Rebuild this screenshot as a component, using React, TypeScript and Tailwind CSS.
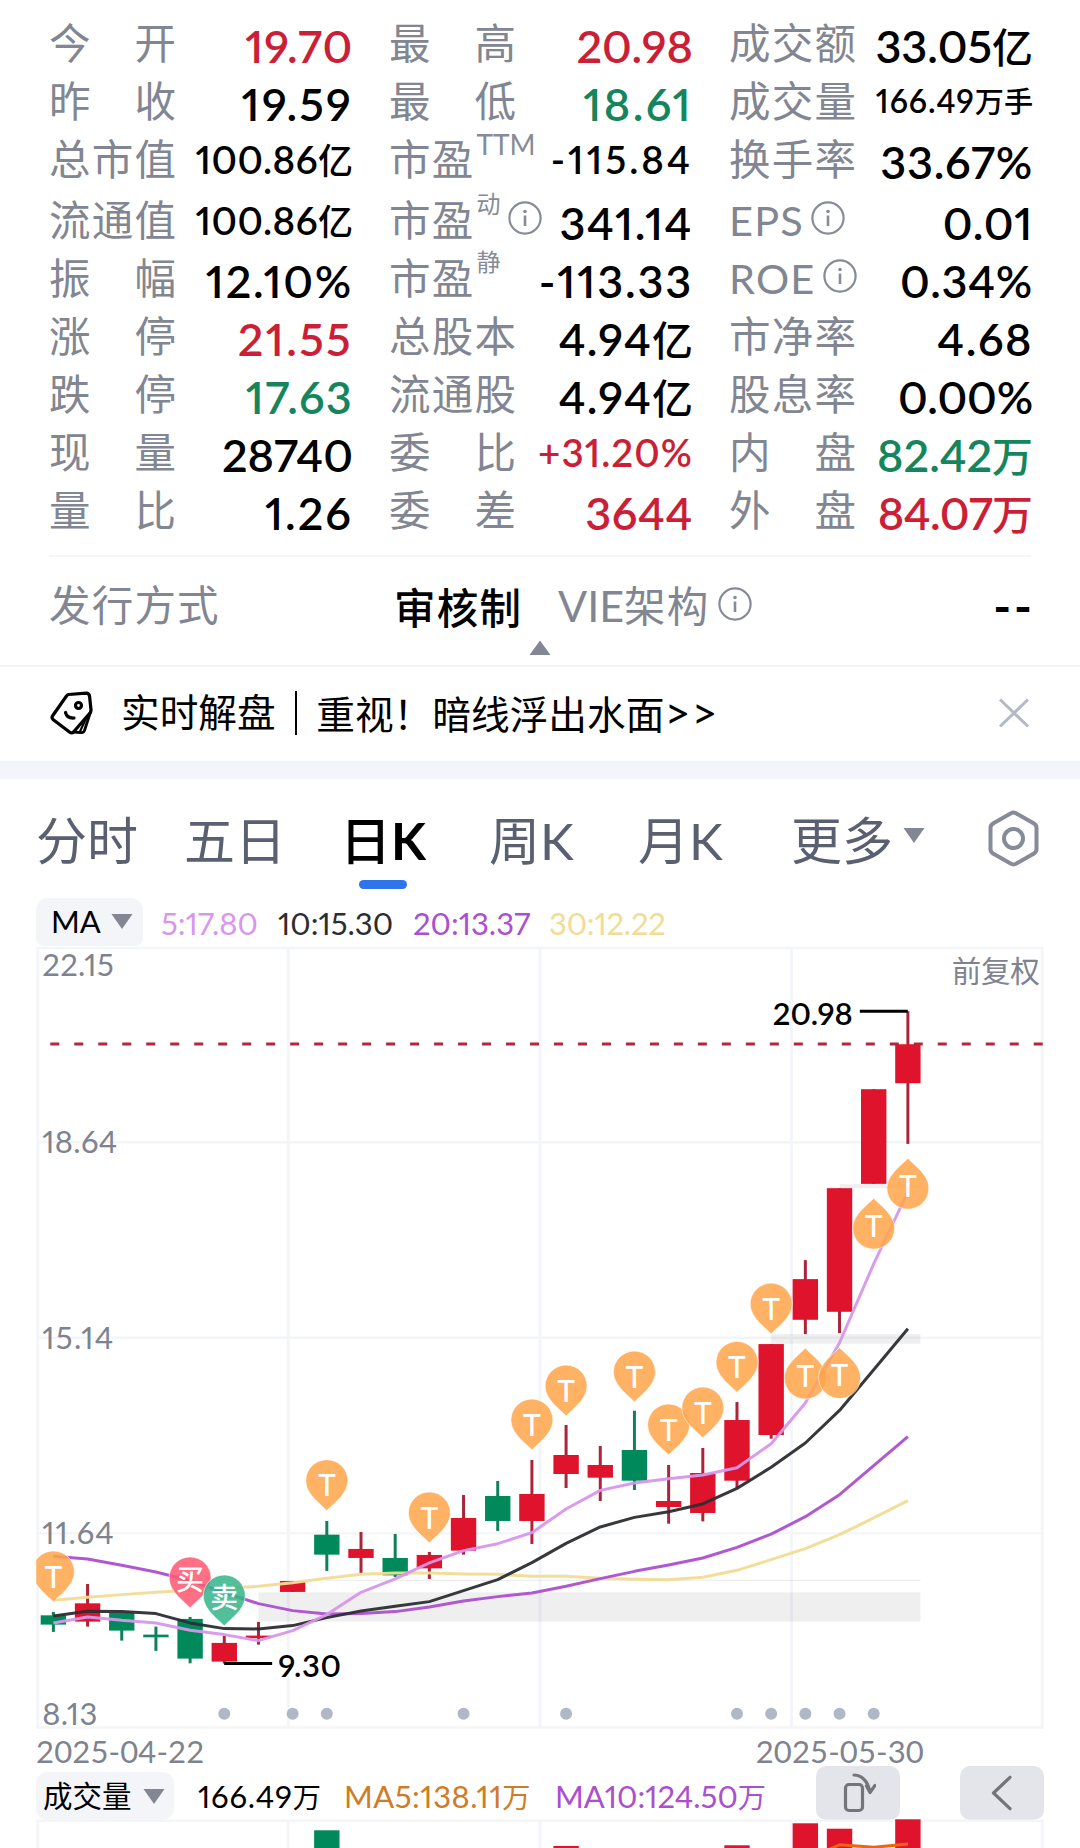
import { Fragment, type ReactNode } from "react";
import clsx from "clsx";

type Tone = "up" | "down" | "flat";

type Stat = {
  label: string;
  value: string;
  tone?: Tone;
  size?: "lg" | "md" | "sm";
  sup?: string;
  info?: boolean;
  track?: string;
};

const rows: Stat[][] = [
  [
    { label: "今　开", value: "19.70", tone: "up", track: "tracking-[0.6px]" },
    { label: "最　高", value: "20.98", tone: "up" },
    { label: "成交额", value: "33.05亿" },
  ],
  [
    { label: "昨　收", value: "19.59", track: "tracking-[2.2px]" },
    { label: "最　低", value: "18.61", tone: "down", track: "tracking-[2.4px]" },
    { label: "成交量", value: "166.49万手", size: "sm", track: "tracking-[0.9px]" },
  ],
  [
    { label: "总市值", value: "100.86亿", size: "md", track: "tracking-[0.4px]" },
    { label: "市盈", sup: "TTM", value: "-115.84", size: "md", track: "tracking-[3px]" },
    { label: "换手率", value: "33.67%", track: "tracking-[0.7px]" },
  ],
  [
    { label: "流通值", value: "100.86亿", size: "md", track: "tracking-[0.4px]" },
    { label: "市盈", sup: "动", info: true, value: "341.14", track: "tracking-[1.5px]" },
    { label: "EPS", info: true, value: "0.01", track: "tracking-[0.6px]" },
  ],
  [
    { label: "振　幅", value: "12.10%", track: "tracking-[1.7px]" },
    { label: "市盈", sup: "静", value: "-113.33", track: "tracking-[1.8px]" },
    { label: "ROE", info: true, value: "0.34%", track: "tracking-[0.7px]" },
  ],
  [
    { label: "涨　停", value: "21.55", tone: "up", track: "tracking-[2.3px]" },
    { label: "总股本", value: "4.94亿", track: "tracking-[1.2px]" },
    { label: "市净率", value: "4.68", track: "tracking-[1.5px]" },
  ],
  [
    { label: "跌　停", value: "17.63", tone: "down", track: "tracking-[1.2px]" },
    { label: "流通股", value: "4.94亿", track: "tracking-[1.2px]" },
    { label: "股息率", value: "0.00%", track: "tracking-[-0.2px]" },
  ],
  [
    { label: "现　量", value: "28740" },
    { label: "委　比", value: "+31.20%", tone: "up", size: "md", track: "tracking-[1px]" },
    { label: "内　盘", value: "82.42万", tone: "down" },
  ],
  [
    { label: "量　比", value: "1.26", track: "tracking-[2px]" },
    { label: "委　差", value: "3644", tone: "up", track: "tracking-[0.6px]" },
    { label: "外　盘", value: "84.07万", tone: "up", track: "tracking-[-0.6px]" },
  ],
];

const toneClass: Record<Tone, string> = {
  up: "text-[#cb1f37]",
  down: "text-[#14855c]",
  flat: "text-black",
};

const sizeClass = {
  lg: "text-[45px] pt-1.5",
  md: "text-[38.5px]",
  sm: "text-[32px]",
};

const InfoIcon = () => (
  <svg className="mb-1 h-[34px] w-[34px] shrink-0" viewBox="0 0 34 34" fill="none">
    <circle cx="17" cy="17" r="15.6" stroke="#868b97" strokeWidth="2.2" />
    <circle cx="17" cy="10.5" r="1.8" fill="#868b97" />
    <path d="M17 14.5v10.5" stroke="#868b97" strokeWidth="2.6" />
  </svg>
);

// digits in Lato, the trailing unit a little smaller in the CJK face
const Num = ({ children, unitClass = "font-medium" }: { children: string; unitClass?: string }) => {
  const [, digits, unit] = children.match(/^([^\u4e00-\u9fff]*)(.*)$/)!;
  return (
    <>
      {digits}
      {unit && <span className={clsx("text-[0.91em] tracking-normal", unitClass)}>{unit}</span>}
    </>
  );
};

const StatCell = ({ label, value, tone = "flat", size = "lg", sup, info, track }: Stat) => (
  <div className="flex h-[58px] items-center whitespace-nowrap">
    <span className="pt-0.5 text-[41.5px] leading-none tracking-[1.2px] text-[#818692]">{label}</span>
    {sup && (
      <span className={clsx("ml-0.5 self-start leading-none text-[#868b97]", sup === "TTM" ? "text-[28px]" : "pt-px text-[24px]")}>
        {sup}
      </span>
    )}
    {info && (
      <span className={sup ? "ml-2" : "ml-[7px]"}>
        <InfoIcon />
      </span>
    )}
    <span className={clsx("-mr-0.5 ml-auto font-semibold leading-none proportional-nums", toneClass[tone], sizeClass[size], track)}>
      <Num>{value}</Num>
    </span>
  </div>
);

const Caret = ({ up, className }: { up?: boolean; className?: string }) => (
  <svg className={clsx("h-[15px] w-[22px]", className)} viewBox="0 0 22 15">
    <path d={up ? "M11 0.5 21.5 15H0.5Z" : "M0.5 0H21.5L11 15Z"} fill="#828793" />
  </svg>
);

// ---- k-line data, in chart pixels ----

const x = (i: number) => 53.1 + i * 34.2;

// [color, bodyTop, bodyBottom, high, low]
const candles: ["r" | "g", number, number, number, number][] = [
  ["g", 1615.7, 1625, 1612.3, 1632.3],
  ["r", 1603.7, 1622, 1584.3, 1627],
  ["g", 1613.3, 1631, 1613.3, 1641],
  ["g", 1635, 1637.7, 1627, 1651.3],
  ["g", 1619.3, 1659, 1617.3, 1663.7],
  ["r", 1643.3, 1662, 1636, 1664],
  ["r", 1636, 1638.5, 1622.3, 1645],
  ["r", 1581.3, 1592.3, 1581.3, 1592.3],
  ["g", 1535, 1555, 1521.3, 1571.3],
  ["r", 1549.3, 1558.3, 1532.3, 1573.7],
  ["g", 1558.3, 1575.7, 1534.3, 1577.3],
  ["r", 1555.3, 1568.7, 1552.3, 1579.3],
  ["r", 1518.3, 1551, 1495.3, 1555],
  ["g", 1496.3, 1521.3, 1481.3, 1531.3],
  ["r", 1494.3, 1521.3, 1460.3, 1544.3],
  ["r", 1455.3, 1474.3, 1425.3, 1488.3],
  ["r", 1465.3, 1478, 1446.3, 1501.3],
  ["g", 1450.3, 1481, 1411, 1490.3],
  ["r", 1501.3, 1507.3, 1465.3, 1524],
  ["r", 1473.3, 1513.3, 1448.3, 1521.7],
  ["r", 1420.3, 1481, 1402.3, 1488.3],
  ["r", 1344.3, 1435.3, 1344.3, 1439],
  ["r", 1279.3, 1320, 1260.3, 1334.3],
  ["r", 1188.3, 1312, 1188.3, 1333.3],
  ["r", 1089.3, 1184, 1089.3, 1184],
  ["r", 1044.3, 1083.3, 1011.3, 1144],
];

const averages = [
  { color: "#f2dc94", ys: [1600.7, 1597.7, 1595, 1592.7, 1590.7, 1588.5, 1586.7, 1583, 1578.7, 1574.7, 1573.3, 1573.3, 1574.3, 1574.7, 1576.7, 1576.7, 1578.7, 1579.5, 1580, 1577.7, 1570.7, 1560, 1549, 1535, 1518.3, 1501] },
  { color: "#ab4fd0", ys: [1556.7, 1559.3, 1565.7, 1572.3, 1581, 1593, 1604, 1611, 1614.3, 1614, 1612, 1607.3, 1601.3, 1597, 1593.3, 1586.7, 1579, 1571.7, 1565.3, 1558.3, 1547.7, 1534.5, 1517, 1495, 1466, 1437] },
  { color: "#2c2d31", ys: [1616.3, 1611.7, 1612, 1614, 1623.3, 1629, 1629.3, 1626, 1618, 1611.3, 1606.7, 1602, 1591, 1580, 1563, 1543.7, 1527.3, 1517.7, 1512, 1504.3, 1488.7, 1467.5, 1443.3, 1410.7, 1370, 1329] },
  { color: "#d797ec", ys: [1623.3, 1617.3, 1620.7, 1623.3, 1630.7, 1635, 1641, 1631, 1615, 1592.7, 1579.3, 1563.3, 1551, 1544, 1533, 1509.3, 1490.7, 1483.3, 1479, 1475.3, 1468, 1444, 1403.3, 1343, 1264, 1192] },
];

type Pin = { i: number; top: number; up?: boolean; text?: string; fill?: string };

const pins: Pin[] = [
  { i: 0, top: 1551.3 },
  { i: 4, top: 1557.3, text: "买", fill: "#ff5771" },
  { i: 5, top: 1575.3, text: "卖", fill: "#35b48a" },
  { i: 8, top: 1460 },
  { i: 11, top: 1492.3 },
  { i: 14, top: 1399.3 },
  { i: 15, top: 1365.3 },
  { i: 17, top: 1351.3 },
  { i: 18, top: 1404.3 },
  { i: 19, top: 1387.3 },
  { i: 20, top: 1341.7 },
  { i: 21, top: 1283.3 },
  { i: 22, top: 1348.3, up: true },
  { i: 23, top: 1347.7, up: true },
  { i: 24, top: 1198.3, up: true },
  { i: 25, top: 1158.3, up: true },
];

const PinMark = ({ i, top, up, text = "T", fill = "#ffa44a" }: Pin) => {
  const cjk = text !== "T";
  return (
    <>
      <g clipPath="url(#plot)">
        <path
          transform={`translate(${x(i)} ${top})`}
          d={
            up
              ? "M0 0C5 6 21 16 21 30A21 21 0 0 1 -21 30C-21 16 -5 6 0 0Z"
              : "M0 51C5 45 21 35 21 21A21 21 0 0 0 -21 21C-21 35 -5 45 0 51Z"
          }
          fill={fill}
          fillOpacity="0.86"
          stroke="#fff"
          strokeOpacity="0.6"
          strokeWidth="1"
        />
      </g>
      <text
        x={x(i)}
        y={top + (cjk ? 33 : up ? 39 : 36.7)}
        textAnchor="middle"
        fill="#fff"
        fontSize={cjk ? 28 : 30}
        fontWeight="500"
      >
        {text}
      </text>
    </>
  );
};

const dots = [5, 7, 8, 12, 15, 20, 21, 22, 23, 24];
const gridX = [37.5, 288, 540, 791.7, 1042.5];

const priceLabels: [string, number, number][] = [
  ["22.15", 976, 71.5],
  ["18.64", 1153.3, 75],
  ["15.14", 1349, 71],
  ["11.64", 1544.5, 71.5],
  ["8.13", 1725.5, 55],
];

const KLineChart = () => (
  <svg className="block h-[790px] w-full proportional-nums" viewBox="0 946 1080 790">
    <defs>
      <clipPath id="plot">
        <rect x="36" y="946" width="1008" height="784" />
      </clipPath>
    </defs>
    <g stroke="#f4f5f9">
      {gridX.map((gx) => (
        <path key={gx} d={`M${gx} 948V1728`} strokeWidth="3" />
      ))}
      {[948, 1142.3, 1338, 1533.7, 1728].map((gy) => (
        <path key={gy} d={`M36 ${gy}H1044`} strokeWidth="2.4" />
      ))}
    </g>

    {/* open price gaps */}
    <g fill="#000" fillOpacity="0.063">
      <rect x="258.3" y="1592.7" width="662.4" height="29.3" />
      <rect x="326" y="1580" width="594.7" height="1.4" />
      <rect x="771" y="1334.3" width="149.7" height="9.7" />
      <rect x="840" y="1184.3" width="80.7" height="4" />
    </g>

    <g fill="#7e838f" fontSize="31">
      {priceLabels.map(([t, ly, w]) => (
        <text key={t} x="42" y={ly} textLength={w}>
          {t}
        </text>
      ))}
      <text x="952" y="982.5" fontSize="29.5" textLength="88">
        前复权
      </text>
    </g>

    {candles.map(([c, top, bottom, high, low], i) => (
      <g key={i}>
        <path d={`M${x(i)} ${high}V${low}`} stroke={c === "r" ? "#ac2439" : "#10805a"} strokeWidth="3" />
        <rect x={x(i) - 12.7} y={top} width="25.4" height={bottom - top} fill={c === "r" ? "#e0132c" : "#008a5c"} />
      </g>
    ))}

    <path d="M50 1044H1043" stroke="#b5253b" strokeWidth="3" strokeDasharray="9 15" />

    {averages.map(({ color, ys }) => (
      <polyline
        key={color}
        points={ys.map((y, i) => `${x(i)},${y}`).join(" ")}
        fill="none"
        stroke={color}
        strokeOpacity="0.95"
        strokeWidth="3"
        strokeLinejoin="round"
      />
    ))}

    <path d="M860 1011.3H908M224 1664H272" stroke="#000" strokeWidth="3" />
    <g fontSize="31" fontWeight="600" fill="#000">
      <text x="773" y="1024.7" textLength="80">
        20.98
      </text>
      <text x="278" y="1677.5" textLength="63">
        9.30
      </text>
    </g>

    {pins.map((p) => (
      <PinMark key={p.i} {...p} />
    ))}
    {dots.map((i) => (
      <circle key={i} cx={x(i)} cy="1714.3" r="6" fill="#b1b8c5" />
    ))}
  </svg>
);

const volumes: ["r" | "g", number, number][] = [
  ["g", 8, 1830.3],
  ["r", 15, 1846],
  ["r", 20, 1845.3],
  ["r", 22, 1823.3],
  ["r", 23, 1828.7],
  ["r", 25, 1819.3],
];

const VolumeChart = () => (
  <svg className="block h-[29px] w-full" viewBox="0 1819 1080 29">
    <path d="M36 1820.7H1044" stroke="#f4f5f9" strokeWidth="2.4" />
    {gridX.map((gx) => (
      <path key={gx} d={`M${gx} 1820V1848`} stroke="#f4f5f9" strokeWidth="3" />
    ))}
    {volumes.map(([c, i, top]) => (
      <rect key={i} x={x(i) - 12.7} y={top} width="25.4" height="40" fill={c === "r" ? "#e0132c" : "#008a5c"} />
    ))}
    <path d="M828 1850 839.9 1844.7 874 1847.3 908.3 1844" fill="none" stroke="#f0640f" strokeWidth="3" />
  </svg>
);

const FloatButton = ({ children }: { children: ReactNode }) => (
  <button className="flex h-[54px] w-[84px] items-center justify-center rounded-[10px] bg-[#e4e5ea]">{children}</button>
);

const tabs = [
  { label: "分时", className: "w-[148px]" },
  { label: "五日", className: "w-[156px]" },
  { label: "日K", className: "w-[149px]", active: true },
  { label: "周K", className: "w-[149px]" },
  { label: "月K", className: "w-[153px]" },
];

const App = () => (
  <div className="flex h-[1848px] w-[1080px] flex-col overflow-hidden bg-white font-[Lato,'Noto_Sans_CJK_SC',sans-serif]">
    {/* quote stats */}
    <section className="h-[555px] px-[49px] pt-3.5">
      <div className="grid grid-cols-3 gap-x-[38px]">
        {rows.map((row, r) => (
          <Fragment key={r}>
            {row.map((s) => (
              <div key={s.label} className={clsx(r === 3 && "pt-[3px]")}>
                <StatCell {...s} />
              </div>
            ))}
          </Fragment>
        ))}
      </div>
    </section>
    <section className="mx-[49px] flex h-[110px] flex-col border-t-2 border-[#f5f6f9]">
      <div className="flex h-[83px] items-center pt-4 text-[41.5px] leading-none tracking-[1.2px] text-[#818692]">
        <span className="w-[345px]">发行方式</span>
        <span className="pt-1.5 font-medium text-black">审核制</span>
        <span className="ml-[36px]">
          <span className="text-[43px] tracking-normal">VIE</span>架构
        </span>
        <span className="ml-2">
          <InfoIcon />
        </span>
        <span className="-mr-1 ml-auto text-[48px] font-bold tracking-[3px] text-black">--</span>
      </div>
      <Caret up className="mx-auto" />
    </section>

    {/* live commentary banner */}
    <section className="flex h-[96px] items-center border-t-2 border-[#f3f4f7] px-[50px] pb-0.5">
      <svg className="h-[44px] w-[43px]" viewBox="0 0 43 44" fill="none" stroke="#000" strokeWidth="3.2" strokeLinecap="round" strokeLinejoin="round">
        <path d="M18.5 3.5 36 2.2Q39.3 2.2 39.6 5.500L41 19Q41 20.5 40.2 21.800L23.5 41Q21.7 42.7 19.8 41.200L3 28.5Q1.2 26.5 2.8 24.500L16.5 5Q17.3 3.8 18.5 3.500Z" />
        <path d="M40.500 21 34.500 39.500Q33.5 42 31 41.600L24 41" strokeWidth="2.8" />
        <path d="M36 27.500 30 40.500" strokeWidth="2.2" />
        <circle cx="28.5" cy="14.5" r="3" />
        <path d="M15.5 21.500Q17 27.500 24 27" />
      </svg>
      <span className="ml-[28px] text-[38.7px] leading-none">实时解盘</span>
      <span className="mx-[19px] h-[44px] w-[2.5px] bg-black" />
      <span className="text-[38.7px] leading-none">
        重视！暗线浮出水面<span className="text-[45px] tracking-[1px]">&gt;&gt;</span>
      </span>
      <svg className="ml-auto h-[30px] w-[32px]" viewBox="0 0 32 30">
        <path d="M2 1.5 30 28.500M30 1.5 2 28.500" stroke="#b3bac6" strokeWidth="3" />
      </svg>
    </section>
    <div className="h-[18px] bg-[#f4f5fa]" />

    {/* period tabs */}
    <nav className="flex h-[119px] pl-[36px] text-[51px] leading-none text-[#5b6070]">
      {tabs.map((t) => (
        <span key={t.label} className={clsx("pt-9", t.className, t.active && "font-medium text-black")}>
          {t.active ? (
            <>
              日<span className="font-bold">K</span>
            </>
          ) : (
            t.label
          )}
          {t.active && <span className="mt-[14px] ml-[19px] block h-[9px] w-[48px] rounded-full bg-[#2f74ea]" />}
        </span>
      ))}
      <span className="pt-9">更多</span>
      <Caret className="mt-[49px] ml-[10px]" />
      <svg className="mt-[31px] ml-[63px] h-[57px] w-[51px]" viewBox="0 0 51 57" fill="none" stroke="#868b97" strokeWidth="4">
        <path d="M23 3.2Q25.5 2 28 3.200L46 13.500Q48.5 15 48.5 18V39Q48.5 42 46 43.500L28 53.800Q25.5 55 23 53.800L5 43.500Q2.5 42 2.5 39V18Q2.5 15 5 13.500Z" />
        <circle cx="25.5" cy="28.5" r="9.5" />
      </svg>
    </nav>

    {/* MA legend */}
    <div className="flex h-[49px] items-center pl-9 text-[31px] leading-none proportional-nums">
      <span className="flex h-[48px] w-[107px] items-center rounded-t-xl rounded-b-lg bg-[#f4f5f9] pl-[15px]">
        MA
        <Caret className="ml-2.5" />
      </span>
      <span className="mt-1 ml-[18px] w-[117px] text-[#d797ec]">5:17.80</span>
      <span className="mt-1 w-[135px] text-[#2c2d31]">10:15.30</span>
      <span className="mt-1 w-[136px] text-[#ab4fd0]">20:13.37</span>
      <span className="mt-1 tracking-[-0.2px] text-[#f2dc94]">30:12.22</span>
    </div>

    <KLineChart />

    <div className="flex h-[31px] items-end justify-between pr-[156px] pl-9 text-[31px] leading-none tracking-[0.15px] text-[#7e838f]">
      <span>2025-04-22</span>
      <span>2025-05-30</span>
    </div>
    <div className="flex h-[52px] shrink-0 items-center pr-9 pl-9 text-[31px] leading-none proportional-nums">
      <span className="mt-1.5 flex h-[48px] w-[138px] items-center rounded-xl bg-[#f4f5f9] pl-[7px] text-[29.5px]">
        成交量
        <Caret className="ml-[11px] h-[14px]" />
      </span>
      <span className="mt-1.5 ml-[24px] w-[146px] tracking-[0.8px]">
        <Num unitClass="font-normal">166.49万</Num>
      </span>
      <span className="mt-1.5 w-[211px] tracking-[0.5px] text-[#d07b25]">
        <Num unitClass="font-normal">MA5:138.11万</Num>
      </span>
      <span className="mt-1.5 text-[#ab4fd0]">
        <Num unitClass="font-normal">MA10:124.50万</Num>
      </span>
      <div className="ml-auto flex gap-[60px]">
        <FloatButton>
          <svg className="h-[42px] w-[36px]" viewBox="0 0 36 42" fill="none" stroke="#747579" strokeWidth="3.2" strokeLinecap="round">
            <rect x="5.5" y="12.5" width="17" height="26" rx="3.5" />
            <path d="M14 3Q26.5 3.500 30 20M26.500 14 30 20.500 35 13.500" strokeLinejoin="round" />
          </svg>
        </FloatButton>
        <FloatButton>
          <svg className="h-[36px] w-[22px]" viewBox="0 0 22 36" fill="none" stroke="#747579" strokeWidth="3.2" strokeLinecap="round" strokeLinejoin="round">
            <path d="M19 2.3 2.5 18 19 33.700" />
          </svg>
        </FloatButton>
      </div>
    </div>
    <VolumeChart />
  </div>
);

export default App;
